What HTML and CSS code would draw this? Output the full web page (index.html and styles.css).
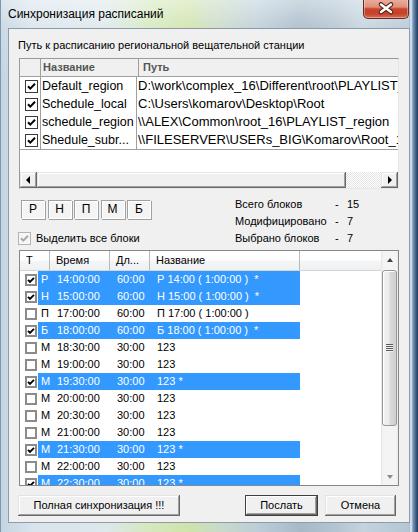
FILE: index.html
```html
<!DOCTYPE html>
<html lang="ru">
<head>
<meta charset="utf-8">
<title>Синхронизация расписаний</title>
<link rel="stylesheet" href="styles.css">
</head>
<body>
<div class="window">
  <div class="titlebar">
    <span class="title">Синхронизация расписаний</span>
    <div class="close">
      <svg width="46" height="19" viewBox="0 0 46 19">
        <path d="M18 5.5 L28 13 M28 5.5 L18 13" stroke="#4a1a14" stroke-width="4.6" stroke-linecap="round" fill="none"/>
        <path d="M18 5.5 L28 13 M28 5.5 L18 13" stroke="#ffffff" stroke-width="2.6" stroke-linecap="round" fill="none"/>
      </svg>
    </div>
  </div>
  <div class="client">
    <div class="label">Путь к расписанию региональной вещательной станции</div>

    <div class="pgrid">
      <div class="phead">
        <div class="ph h0"></div>
        <div class="ph h1">Название</div>
        <div class="ph h2">Путь</div>
      </div>
      <div class="prow">
        <div class="pc c0"><span class="pcb"><svg viewBox="0 0 11 11"><path d="M2 5.2 L4.3 7.6 L9 2.8"/></svg></span></div>
        <div class="pc c1">Default_region</div>
        <div class="pc c2">D:\work\complex_16\Different\root\PLAYLIST_region</div>
      </div>
      <div class="prow">
        <div class="pc c0"><span class="pcb"><svg viewBox="0 0 11 11"><path d="M2 5.2 L4.3 7.6 L9 2.8"/></svg></span></div>
        <div class="pc c1">Schedule_local</div>
        <div class="pc c2">C:\Users\komarov\Desktop\Root</div>
      </div>
      <div class="prow">
        <div class="pc c0"><span class="pcb"><svg viewBox="0 0 11 11"><path d="M2 5.2 L4.3 7.6 L9 2.8"/></svg></span></div>
        <div class="pc c1">schedule_region</div>
        <div class="pc c2">\\ALEX\Common\root_16\PLAYLIST_region</div>
      </div>
      <div class="prow last">
        <div class="pc c0"><span class="pcb"><svg viewBox="0 0 11 11"><path d="M2 5.2 L4.3 7.6 L9 2.8"/></svg></span></div>
        <div class="pc c1">Shedule_subr...</div>
        <div class="pc c2">\\FILESERVER\USERs_BIG\Komarov\Root_16</div>
      </div>
      <div class="pfill"></div>
      <div class="hscroll">
        <div class="sbtn"><span class="tri-left"></span></div>
        <div class="hthumb"></div>
        <div class="htrack"></div>
        <div class="sbtn"><span class="tri-right"></span></div>
      </div>
    </div>

    <div class="mid">
      <div class="mleft">
        <div class="letters">
          <div class="lb">Р</div>
          <div class="lb">Н</div>
          <div class="lb">П</div>
          <div class="lb">М</div>
          <div class="lb">Б</div>
        </div>
        <div class="selall">
          <span class="dcb"><svg viewBox="0 0 11 11"><path d="M2 5.2 L4.3 7.6 L9 2.8"/></svg></span>
          <span>Выделить все блоки</span>
        </div>
      </div>
      <div class="stats">
        <span>Всего блоков</span><span>-</span><span>15</span>
        <span>Модифицировано</span><span>-</span><span>7</span>
        <span>Выбрано блоков</span><span>-</span><span>7</span>
      </div>
    </div>

    <div class="lgrid">
      <div class="lmain">
        <div class="lhead">
          <div class="lh w0">Т</div>
          <div class="lh w1">Время</div>
          <div class="lh w2">Дл...</div>
          <div class="lh w3">Название</div>
          <div class="lh w4"></div>
        </div>
        <div class="lrows">
          <div class="lrow on">
            <div class="ck"><span class="lcb"><svg viewBox="0 0 8 8"><path d="M1 3.8 L3 5.9 L7 1.8"/></svg></span></div>
            <div class="sel"><span class="t0">Р</span><span class="t1">14:00:00</span><span class="t2">60:00</span><span class="t3">Р 14:00 ( 1:00:00 )&nbsp; *</span></div>
          </div>
          <div class="lrow on">
            <div class="ck"><span class="lcb"><svg viewBox="0 0 8 8"><path d="M1 3.8 L3 5.9 L7 1.8"/></svg></span></div>
            <div class="sel"><span class="t0">Н</span><span class="t1">15:00:00</span><span class="t2">60:00</span><span class="t3">Н 15:00 ( 1:00:00 )&nbsp; *</span></div>
          </div>
          <div class="lrow">
            <div class="ck"><span class="lcb"></span></div>
            <div class="sel"><span class="t0">П</span><span class="t1">17:00:00</span><span class="t2">60:00</span><span class="t3">П 17:00 ( 1:00:00 )</span></div>
          </div>
          <div class="lrow on">
            <div class="ck"><span class="lcb"><svg viewBox="0 0 8 8"><path d="M1 3.8 L3 5.9 L7 1.8"/></svg></span></div>
            <div class="sel"><span class="t0">Б</span><span class="t1">18:00:00</span><span class="t2">60:00</span><span class="t3">Б 18:00 ( 1:00:00 )&nbsp; *</span></div>
          </div>
          <div class="lrow">
            <div class="ck"><span class="lcb"></span></div>
            <div class="sel"><span class="t0">М</span><span class="t1">18:30:00</span><span class="t2">30:00</span><span class="t3">123</span></div>
          </div>
          <div class="lrow">
            <div class="ck"><span class="lcb"></span></div>
            <div class="sel"><span class="t0">М</span><span class="t1">19:00:00</span><span class="t2">30:00</span><span class="t3">123</span></div>
          </div>
          <div class="lrow on">
            <div class="ck"><span class="lcb"><svg viewBox="0 0 8 8"><path d="M1 3.8 L3 5.9 L7 1.8"/></svg></span></div>
            <div class="sel"><span class="t0">М</span><span class="t1">19:30:00</span><span class="t2">30:00</span><span class="t3">123 *</span></div>
          </div>
          <div class="lrow">
            <div class="ck"><span class="lcb"></span></div>
            <div class="sel"><span class="t0">М</span><span class="t1">20:00:00</span><span class="t2">30:00</span><span class="t3">123</span></div>
          </div>
          <div class="lrow">
            <div class="ck"><span class="lcb"></span></div>
            <div class="sel"><span class="t0">М</span><span class="t1">20:30:00</span><span class="t2">30:00</span><span class="t3">123</span></div>
          </div>
          <div class="lrow">
            <div class="ck"><span class="lcb"></span></div>
            <div class="sel"><span class="t0">М</span><span class="t1">21:00:00</span><span class="t2">30:00</span><span class="t3">123</span></div>
          </div>
          <div class="lrow on">
            <div class="ck"><span class="lcb"><svg viewBox="0 0 8 8"><path d="M1 3.8 L3 5.9 L7 1.8"/></svg></span></div>
            <div class="sel"><span class="t0">М</span><span class="t1">21:30:00</span><span class="t2">30:00</span><span class="t3">123 *</span></div>
          </div>
          <div class="lrow">
            <div class="ck"><span class="lcb"></span></div>
            <div class="sel"><span class="t0">М</span><span class="t1">22:00:00</span><span class="t2">30:00</span><span class="t3">123</span></div>
          </div>
          <div class="lrow on">
            <div class="ck"><span class="lcb"><svg viewBox="0 0 8 8"><path d="M1 3.8 L3 5.9 L7 1.8"/></svg></span></div>
            <div class="sel"><span class="t0">М</span><span class="t1">22:30:00</span><span class="t2">30:00</span><span class="t3">123 *</span></div>
          </div>
        </div>
      </div>
      <div class="vscroll">
        <div class="vbtn"><span class="tri-up"></span></div>
        <div class="vtrack">
          <div class="vthumb"><span class="grip"></span></div>
        </div>
        <div class="vbtn"><span class="tri-down"></span></div>
      </div>
    </div>

    <div class="btns">
      <div class="btn full">Полная синхронизация !!!</div>
      <div class="btn ok">Послать</div>
      <div class="btn cancel">Отмена</div>
    </div>
  </div>
</div>
</body>
</html>
```

FILE: styles.css
```css
* { box-sizing: border-box; }
html, body { margin: 0; padding: 0; }
body {
  width: 418px;
  height: 532px;
  overflow: hidden;
  font-family: "Liberation Sans", Arial, sans-serif;
  font-size: 11px;
  color: #000;
}

.window {
  width: 418px;
  height: 532px;
  display: flex;
  flex-direction: column;
  background:
    linear-gradient(90deg, #7f97ad 0, #7f97ad 1px, transparent 1px),
    linear-gradient(90deg, transparent 409px, #9ab1c6 409px, #e4eef7 411px, #7a98b6 413px, #3b5d82 416px, #243f5e 418px),
    linear-gradient(180deg, rgba(255,255,255,.45) 0, rgba(255,255,255,.12) 28px, rgba(255,255,255,0) 80px),
    linear-gradient(90deg, #c3d4e2 0%, #d9e4ec 8%, #dde8ec 25%, #d5e8bd 36%, #cfe3aa 45%, #c9dbc7 52%, #bccdd9 62%, #a7b9c8 72%, #b3c4d1 80%, #c4d3de 87%, #b1c4d3 100%);
}

.titlebar {
  height: 28px;
  flex: 0 0 28px;
  display: flex;
  align-items: flex-start;
  padding-left: 8px;
}
.title {
  font-size: 12px;
  line-height: 28px;
  color: #000;
}
.close {
  margin-left: auto;
  margin-right: 9px;
  margin-top: -1px;
  width: 46px;
  height: 20px;
  border: 1px solid #5e2c26;
  border-top: none;
  border-radius: 0 0 5px 5px;
  background: linear-gradient(#eab0a1 0%, #df907b 42%, #c8452c 52%, #c6432b 78%, #dc6e50 100%);
  box-shadow: inset 0 0 0 1px rgba(255,255,255,.35);
  overflow: hidden;
}
.close svg { display: block; margin: 0 0 0 -1px; }

.client {
  margin: 0 8px;
  height: 495px;
  flex: 0 0 495px;
  border: 1px solid #8c9cab;
  background: #f0f0f0;
  padding: 10px 10px 6px 10px;
  display: flex;
  flex-direction: column;
}

.label {
  height: 13px;
  line-height: 13px;
  margin-left: -1px;
  white-space: nowrap;
}

/* upper grid */
.pgrid {
  margin-top: 6px;
  height: 131px;
  flex: 0 0 131px;
  border: 1px solid;
  border-color: #9a9a9a #e6e6e6 #e6e6e6 #9a9a9a;
  background: #fff;
  display: flex;
  flex-direction: column;
}
.phead {
  height: 18px;
  flex: 0 0 18px;
  display: flex;
  background: #f0f0f0;
  border-bottom: 1px solid #a0a0a0;
}
.ph {
  height: 100%;
  border-right: 1px solid #a0a0a0;
  font-weight: bold;
  color: #555;
  line-height: 17px;
  white-space: nowrap;
  overflow: hidden;
}
.h0 { width: 21px; }
.h1 { width: 98px; padding-left: 2px; }
.h2 { flex: 1; border-right: none; padding-left: 4px; }

.prow {
  height: 18px;
  flex: 0 0 18px;
  display: flex;
  font-size: 12.5px;
  line-height: 18px;
}
.prow.last { height: 19px; flex-basis: 19px; border-bottom: 1px solid #a0a0a0; }
.pc {
  height: 18px;
  white-space: nowrap;
  overflow: hidden;
  border-right: 1px solid #a0a0a0;
}
.c0 { width: 21px; display: flex; align-items: center; padding-left: 5px; }
.c1 { width: 96px; padding-left: 1px; }
.c2 { flex: 1; border-right: none; padding-left: 1px; font-size: 13px; }

.pcb {
  width: 13px;
  height: 13px;
  border: 1px solid #3a3a3a;
  background: #fff;
  display: block;
}
.pcb svg, .lcb svg, .dcb svg { display: block; width: 100%; height: 100%; }
.pcb path { stroke: #000; stroke-width: 2; fill: none; }

.pfill { height: 22px; flex: 0 0 22px; background: #fff; }

.hscroll {
  height: 16px;
  flex: 0 0 16px;
  display: flex;
}
.sbtn {
  width: 17px;
  flex: 0 0 17px;
  height: 16px;
  background: #f0f0f0;
  box-shadow: inset -1px -1px #696969, inset 1px 1px #e3e3e3, inset -2px -2px #a0a0a0, inset 2px 2px #fff;
  display: flex;
  align-items: center;
  justify-content: center;
}
.hthumb {
  width: 309px;
  flex: 0 0 309px;
  background: #f0f0f0;
  box-shadow: inset -1px -1px #696969, inset 1px 1px #e3e3e3, inset -2px -2px #a0a0a0, inset 2px 2px #fff;
}
.htrack {
  flex: 1;
  background: repeating-conic-gradient(#ffffff 0 25%, #e4e4e4 0 50%) 0 0 / 2px 2px;
}
.tri-left {
  width: 0; height: 0;
  border-top: 4px solid transparent;
  border-bottom: 4px solid transparent;
  border-right: 4px solid #000;
  margin-right: 1px;
}
.tri-right {
  width: 0; height: 0;
  border-top: 4px solid transparent;
  border-bottom: 4px solid transparent;
  border-left: 4px solid #000;
  margin-left: 1px;
}

/* middle */
.mid {
  height: 61px;
  flex: 0 0 61px;
  display: flex;
}
.mleft {
  width: 216px;
  flex: 0 0 216px;
  padding-top: 11px;
}
.letters {
  display: flex;
  gap: 2.5px;
  margin-left: 2px;
}
.lb {
  width: 24px;
  height: 19px;
  background: #f4f4f4;
  border: 1px solid;
  border-color: #a0a0a0 #ffffff #ffffff #a0a0a0;
  box-shadow: 1px 1px 0 #a0a0a0, inset 1px 1px 0 #ffffff;
  text-align: center;
  line-height: 17px;
  font-size: 12px;
}
.selall {
  margin-top: 13px;
  margin-left: -1px;
  display: flex;
  align-items: center;
  height: 13px;
  line-height: 13px;
  gap: 5px;
}
.dcb {
  width: 13px;
  height: 13px;
  border: 1px solid #b4b4b4;
  background: #f6f6f6;
  display: block;
}
.dcb path { stroke: #a8a8a8; stroke-width: 2; fill: none; }

.stats {
  padding-top: 7px;
  display: grid;
  grid-template-columns: 100px 12px auto;
  grid-auto-rows: 17px;
  line-height: 17px;
  align-content: start;
  font-size: 11px;
}

/* lower list */
.lgrid {
  height: 236px;
  flex: 0 0 236px;
  border: 1px solid #828790;
  background: #fff;
  display: flex;
}
.lmain {
  width: 361px;
  flex: 0 0 361px;
  display: flex;
  flex-direction: column;
}
.lhead {
  height: 20px;
  flex: 0 0 20px;
  display: flex;
  background: linear-gradient(#ffffff 0%, #ffffff 45%, #f4f5f7 55%, #eef0f2 100%);
  border-bottom: 1px solid #d5d5d5;
}
.lh {
  height: 19px;
  line-height: 19px;
  padding-left: 6px;
  border-right: 1px solid #b9b9b9;
  white-space: nowrap;
  font-size: 11px;
}
.w0 { width: 30px; }
.w1 { width: 60px; }
.w2 { width: 40px; }
.w3 { width: 150px; }
.w4 { flex: 1; border-right: none; }

.lrows {
  height: 214px;
  overflow: hidden;
}
.lrow {
  height: 17px;
  display: flex;
  line-height: 17px;
  font-size: 11px;
}
.ck {
  width: 18px;
  flex: 0 0 18px;
  display: flex;
  align-items: center;
  padding-left: 5px;
}
.lcb {
  width: 12px;
  height: 12px;
  border: 2px solid #8b8b8b;
  background: #fff;
  display: block;
}
.lcb path { stroke: #000; stroke-width: 1.9; fill: none; }
.sel {
  width: 262px;
  display: flex;
  white-space: nowrap;
}
.lrow.on .sel { background: #3399ff; color: #fff; }
.t0 { width: 12px; padding-left: 3px; }
.t1 { width: 60px; padding-left: 7px; }
.t2 { width: 40px; padding-left: 7px; }
.t3 { width: 150px; padding-left: 7px; overflow: hidden; }

.vscroll {
  width: 17px;
  flex: 0 0 17px;
  display: flex;
  flex-direction: column;
  background: linear-gradient(90deg, #e3e3e3 0, #f4f4f4 2px, #f4f4f4 15px, #e9e9e9 17px);
}
.vbtn {
  height: 17px;
  flex: 0 0 17px;
  display: flex;
  align-items: center;
  justify-content: center;
}
.vtrack {
  flex: 1;
  padding-top: 2px;
}
.vthumb {
  margin-left: 1px;
  width: 15px;
  height: 156px;
  border: 1px solid #979797;
  border-radius: 3px;
  background: linear-gradient(90deg, #f2f2f2 0%, #ebebeb 45%, #d9d9d9 55%, #d0d0d0 100%);
  box-shadow: inset 1px 1px 0 #fff;
  display: flex;
  align-items: center;
  justify-content: center;
}
.grip {
  width: 7px;
  height: 8px;
  background: repeating-linear-gradient(180deg, #5a5a5a 0, #5a5a5a 1px, #f0f0f0 1px, #f0f0f0 2px);
}
.tri-up {
  width: 0; height: 0;
  border-left: 3.5px solid transparent;
  border-right: 3.5px solid transparent;
  border-bottom: 4px solid #404040;
}
.tri-down {
  width: 0; height: 0;
  border-left: 3.5px solid transparent;
  border-right: 3.5px solid transparent;
  border-top: 4px solid #8a8a8a;
}

/* buttons */
.btns {
  margin-top: 9px;
  height: 21px;
  flex: 0 0 21px;
  display: flex;
}
.btn {
  height: 21px;
  background: #f0f0f0;
  box-shadow: inset -1px -1px #696969, inset 1px 1px #e3e3e3, inset -2px -2px #a0a0a0, inset 2px 2px #fff;
  text-align: center;
  line-height: 21px;
  font-size: 11px;
  white-space: nowrap;
}
.full { width: 162px; margin-left: -1px; }
.ok {
  width: 73px;
  margin-left: auto;
  box-shadow: inset 0 0 0 1px #404040, inset -2px -2px #696969, inset 2px 2px #fff, inset -3px -3px #a0a0a0;
}
.cancel { width: 71px; margin-left: 7px; margin-right: 3px; }
```
